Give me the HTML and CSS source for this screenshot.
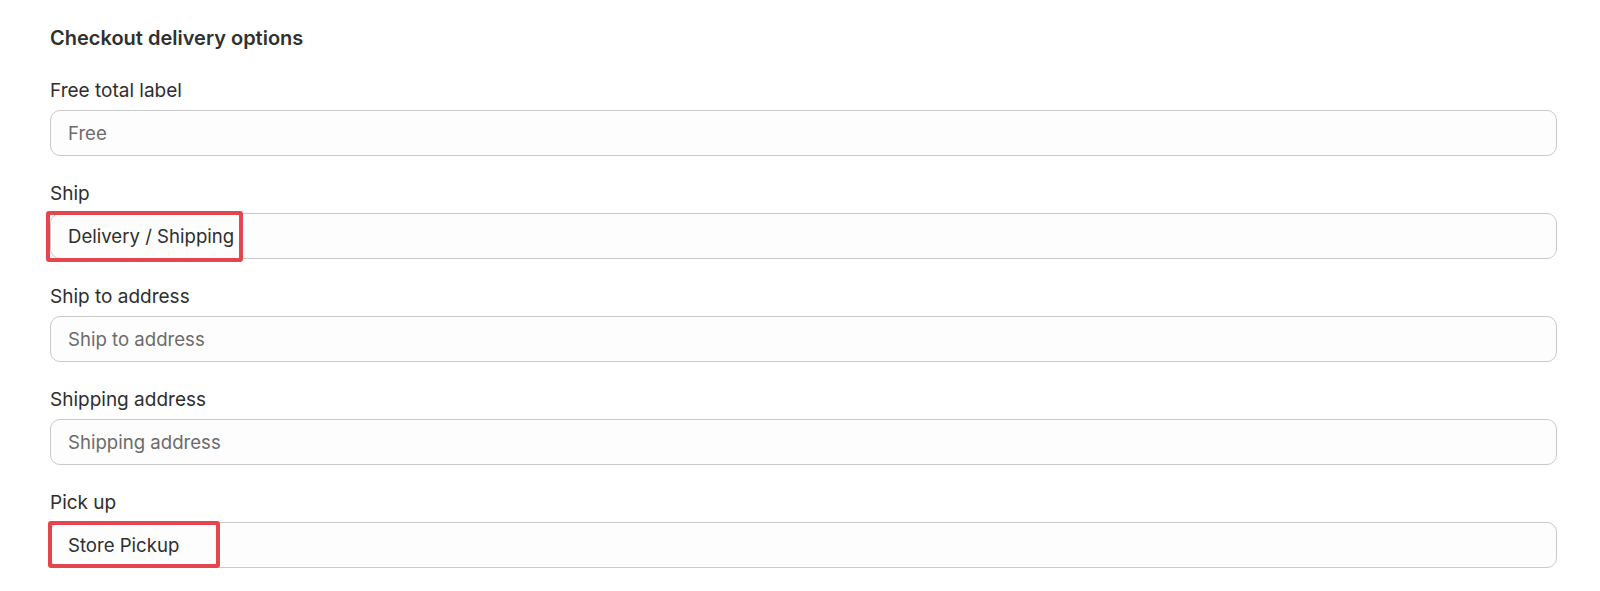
FILE: index.html
```html
<!DOCTYPE html>
<html lang="en">
<head>
<meta charset="utf-8">
<title>Checkout delivery options</title>
<link rel="stylesheet" href="styles.css">
</head>
<body>
<section class="panel">
  <h2 class="title">Checkout delivery options</h2>
  <div class="field">
    <label class="label">Free total label</label>
    <div class="input-wrap"><input class="input" type="text" placeholder="Free"></div>
  </div>
  <div class="field">
    <label class="label">Ship</label>
    <div class="input-wrap"><input class="input" type="text" value="Delivery / Shipping"><span class="mark mark-ship"></span></div>
  </div>
  <div class="field">
    <label class="label">Ship to address</label>
    <div class="input-wrap"><input class="input" type="text" placeholder="Ship to address"></div>
  </div>
  <div class="field">
    <label class="label">Shipping address</label>
    <div class="input-wrap"><input class="input" type="text" placeholder="Shipping address"></div>
  </div>
  <div class="field">
    <label class="label">Pick up</label>
    <div class="input-wrap"><input class="input" type="text" value="Store Pickup"><span class="mark mark-pick"></span></div>
  </div>
</section>
</body>
</html>
```

FILE: styles.css
```css
* { box-sizing: border-box; }
html, body { margin: 0; padding: 0; background: #ffffff; }
body {
  font-family: Inter, "Noto Sans", sans-serif;
  color: #303030;
}
.panel {
  padding: 24px 43px 0 50px;
  display: flex;
  flex-direction: column;
}
.title {
  margin: 0 0 25px 0;
  font-size: 20px;
  line-height: 28px;
  font-weight: 600;
  color: #303030;
}
.field {
  display: flex;
  flex-direction: column;
  gap: 5px;
  margin-bottom: 24px;
}
.label {
  font-size: 19px;
  line-height: 28px;
  font-weight: 400;
  color: #2e2e2e;
}
.input-wrap { position: relative; }
.input {
  display: block;
  width: 100%;
  height: 46px;
  margin: 0;
  padding: 0 17px;
  border: 1px solid #c9c9c9;
  border-radius: 10px;
  background: #fdfdfd;
  font-family: Inter, "Noto Sans", sans-serif;
  font-size: 18.6px;
  color: #2e2e2e;
  outline: none;
}
.input::placeholder { color: #6b6b6b; opacity: 1; }
.mark {
  position: absolute;
  border: 4px solid #e3464e;
  border-radius: 3px;
  pointer-events: none;
}
.mark-ship { left: -4px; top: -2px; width: 197px; height: 51px; }
.mark-pick { left: -2px; top: -1px; width: 172px; height: 47px; }
```
